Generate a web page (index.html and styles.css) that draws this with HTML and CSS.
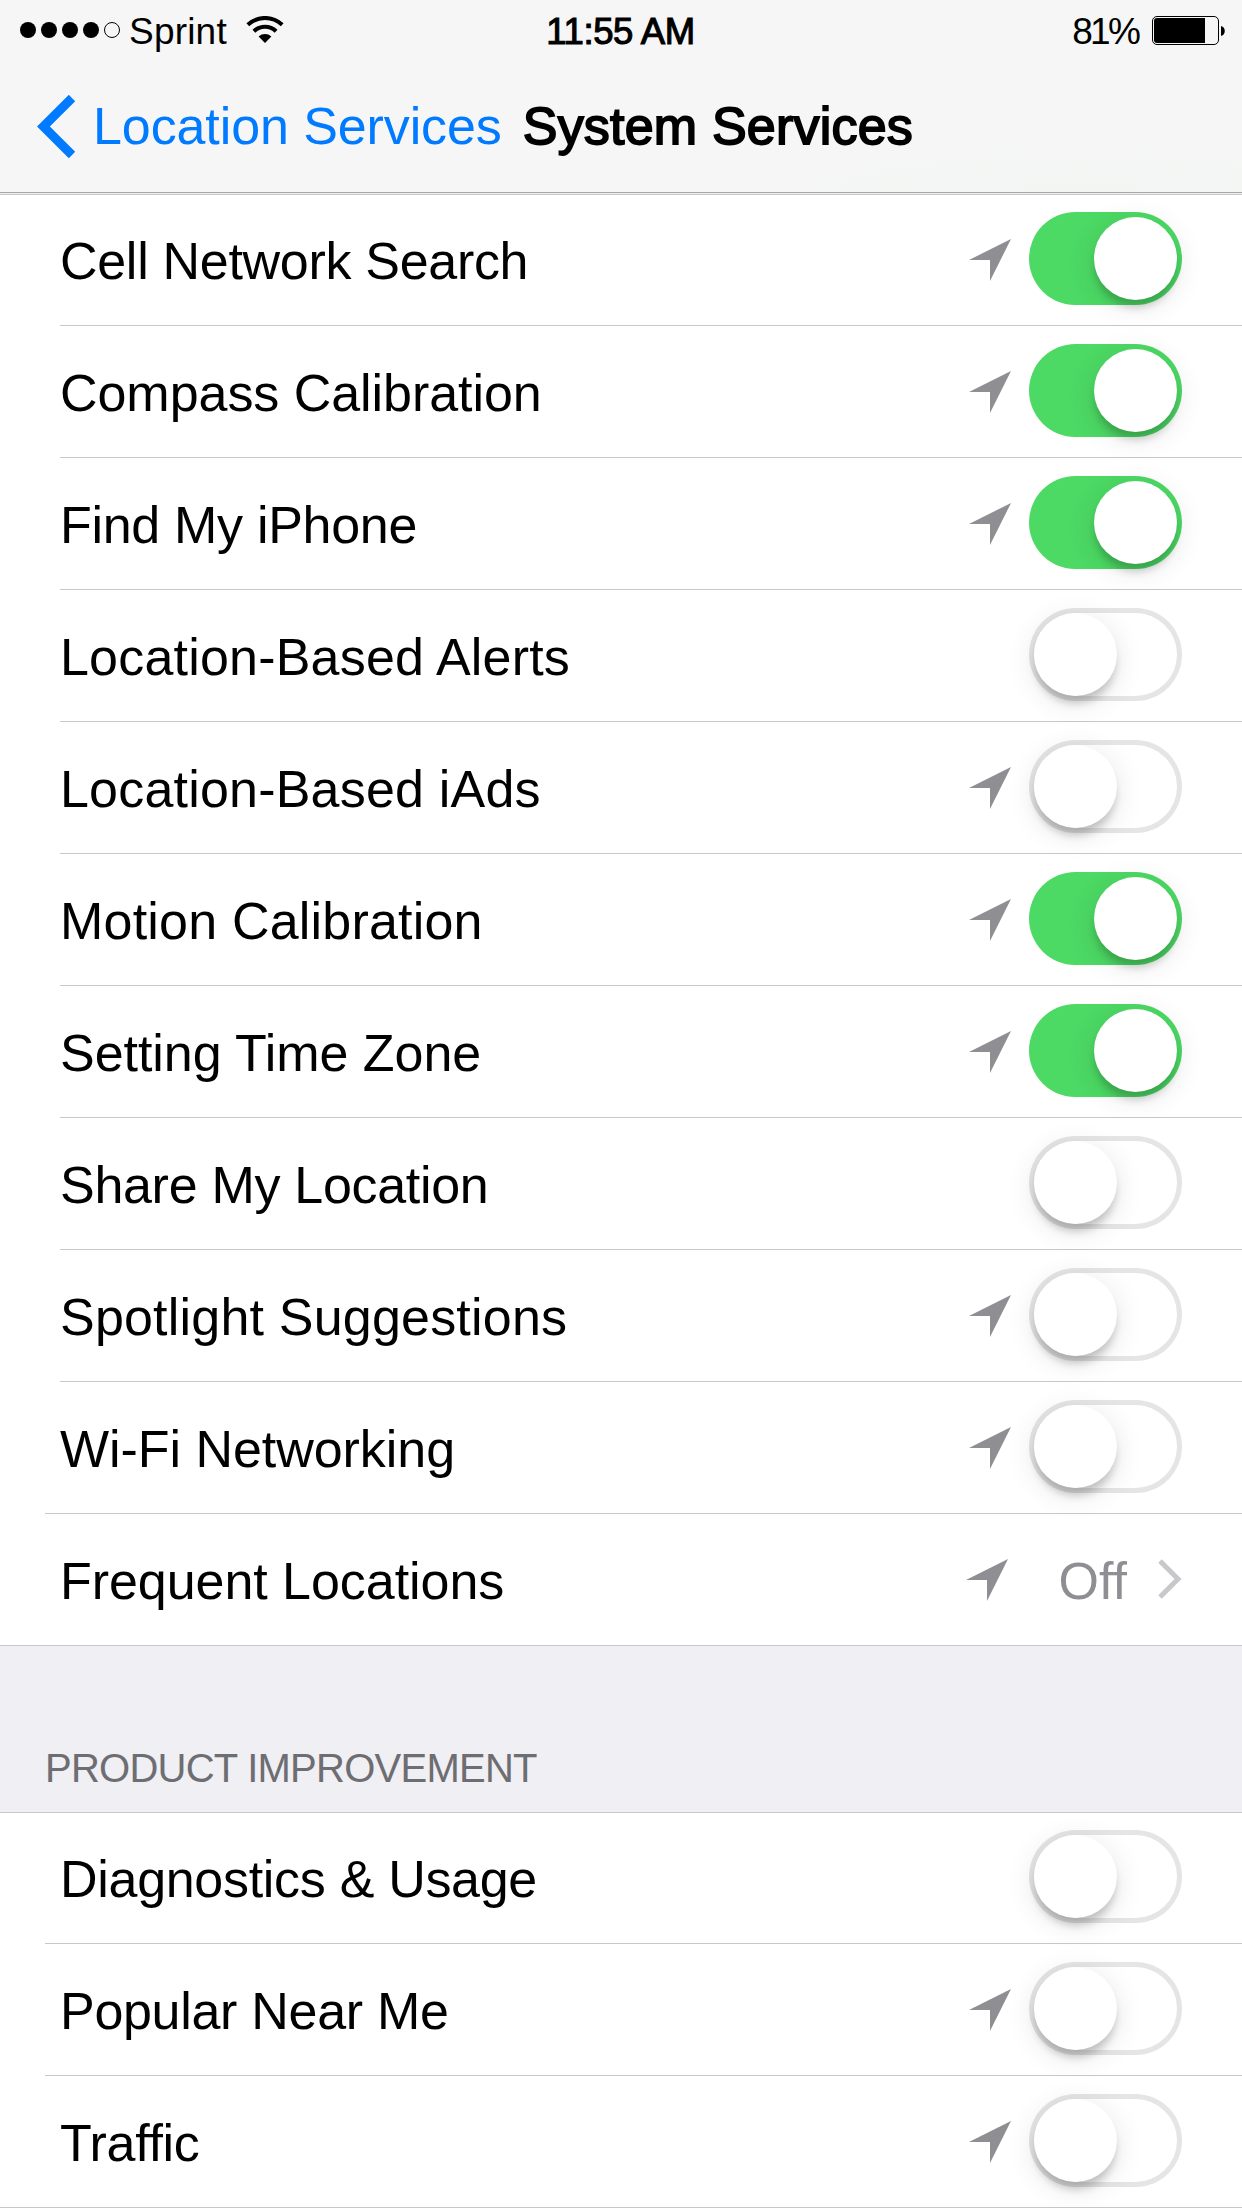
FILE: index.html
```html
<!DOCTYPE html>
<html lang="en">
<head>
  <meta charset="utf-8">
  <title>System Services</title>
  <link rel="stylesheet" href="styles.css">
</head>
<body>
  <svg class="defs" aria-hidden="true">
    <symbol id="arrow" viewBox="0 0 42 42">
      <path d="M42 0 L21 42 V21 H0 Z" fill="#8e8e93"/>
    </symbol>
  </svg>

  <header class="header">
    <div class="status-bar">
      <div class="status-left">
        <div class="signal">
          <span class="dot"></span>
          <span class="dot"></span>
          <span class="dot"></span>
          <span class="dot"></span>
          <span class="dot empty"></span>
        </div>
        <span class="carrier">Sprint</span>
        <svg class="wifi" width="38" height="28" viewBox="0 0 38 28">
          <path d="M1.8 8.8 A25 25 0 0 1 36.2 8.8" fill="none" stroke="#000" stroke-width="4"/>
          <path d="M7.9 15.2 A16 16 0 0 1 30.1 15.2" fill="none" stroke="#000" stroke-width="4"/>
          <path d="M12.6 20.4 A9.5 9.5 0 0 1 25.4 20.4 L19 27 Z"/>
        </svg>
      </div>
      <div class="time">11:55 AM</div>
      <div class="status-right">
        <span class="percent">81%</span>
        <svg class="battery" width="74" height="29" viewBox="0 0 74 29">
          <rect x="0.5" y="0.5" width="66" height="28" rx="4.5" fill="none" stroke="#000"/>
          <path d="M53 2 H5 A3 3 0 0 0 2 5 V24 A3 3 0 0 0 5 27 H53 Z"/>
          <path d="M69 10 C74 11 74 19 69 20 Z"/>
        </svg>
      </div>
    </div>
    <div class="nav-bar">
      <svg class="back" width="40" height="64" viewBox="0 0 40 64">
        <path d="M36 3 L7.4 31.5 L36 60" fill="none" stroke="#007aff" stroke-width="9"/>
      </svg>
      <a class="back-label">Location Services</a>
      <h1 class="title">System Services</h1>
    </div>
  </header>

  <main>
    <div class="group">
      <div class="row">
        <span class="label tight">Cell Network Search</span>
        <svg class="arrow"><use href="#arrow"/></svg>
        <span class="toggle on"></span>
      </div>
      <div class="row">
        <span class="label">Compass Calibration</span>
        <svg class="arrow"><use href="#arrow"/></svg>
        <span class="toggle on"></span>
      </div>
      <div class="row">
        <span class="label tight">Find My iPhone</span>
        <svg class="arrow"><use href="#arrow"/></svg>
        <span class="toggle on"></span>
      </div>
      <div class="row">
        <span class="label wide">Location-Based Alerts</span>
        <span class="toggle"></span>
      </div>
      <div class="row">
        <span class="label wide">Location-Based iAds</span>
        <svg class="arrow"><use href="#arrow"/></svg>
        <span class="toggle"></span>
      </div>
      <div class="row">
        <span class="label wide">Motion Calibration</span>
        <svg class="arrow"><use href="#arrow"/></svg>
        <span class="toggle on"></span>
      </div>
      <div class="row">
        <span class="label">Setting Time Zone</span>
        <svg class="arrow"><use href="#arrow"/></svg>
        <span class="toggle on"></span>
      </div>
      <div class="row">
        <span class="label tight">Share My Location</span>
        <span class="toggle"></span>
      </div>
      <div class="row">
        <span class="label wide">Spotlight Suggestions</span>
        <svg class="arrow"><use href="#arrow"/></svg>
        <span class="toggle"></span>
      </div>
      <div class="row outdent">
        <span class="label">Wi-Fi Networking</span>
        <svg class="arrow"><use href="#arrow"/></svg>
        <span class="toggle"></span>
      </div>
      <div class="row full">
        <span class="label">Frequent Locations</span>
        <svg class="arrow"><use href="#arrow"/></svg>
        <span class="value">Off</span>
        <svg class="chevron" width="24" height="40" viewBox="0 0 24 40">
          <path d="M2 2 L20 20 L2 38" fill="none" stroke="#c7c7cc" stroke-width="5"/>
        </svg>
      </div>
    </div>

    <h2 class="section-title">PRODUCT IMPROVEMENT</h2>

    <div class="group">
      <div class="row outdent">
        <span class="label tight">Diagnostics &amp; Usage</span>
        <span class="toggle"></span>
      </div>
      <div class="row outdent">
        <span class="label tight">Popular Near Me</span>
        <svg class="arrow"><use href="#arrow"/></svg>
        <span class="toggle"></span>
      </div>
      <div class="row full">
        <span class="label tight">Traffic</span>
        <svg class="arrow"><use href="#arrow"/></svg>
        <span class="toggle"></span>
      </div>
    </div>
  </main>
</body>
</html>
```
FILE: styles.css
```css
:root {
  --tint: #007aff;
  --green: #4cd964;
  --gray: #8e8e93;
  --separator: #c8c7cc;
  --group-background: #efeff4;
}

* {
  box-sizing: border-box;
}

body {
  margin: 0;
  width: 1242px;
  height: 2208px;
  overflow: hidden;
  background-color: #ffffff;
  color: #000000;
  font-family: "Liberation Sans", Arial, sans-serif;
  font-size: 52px;
}

svg {
  display: block;
  flex-shrink: 0;
}

.defs {
  width: 0;
  height: 0;
  position: absolute;
}

/* Header */
.header {
  height: 195px;
  background: radial-gradient(ellipse 420px 60px at 1080px 192px, #f2f6f3, #f6f6f6);
  border-bottom: 1px solid var(--separator);
  box-shadow: inset 0 -1px 0 #eeeeee, inset 0 -2px 0 #a7a7aa;
}

.status-bar {
  display: grid;
  grid-template-columns: 1fr auto 1fr;
  height: 60px;
  padding: 0 16px 0 20px;
  font-size: 37px;
  line-height: 64px;
}

.status-left,
.status-right {
  display: flex;
}

.status-right {
  justify-content: flex-end;
}

.signal {
  display: flex;
  gap: 5px;
  padding-top: 22px;
}

.dot {
  width: 16px;
  height: 16px;
  border-radius: 50%;
  background-color: #000000;
}

.dot.empty {
  background-color: transparent;
  border: 1px solid #000000;
}

.carrier {
  margin-left: 9px;
  letter-spacing: 0.2px;
}

.wifi {
  margin: 16px 0 0 19px;
}

.time {
  margin-right: 5px;
  font-size: 36.5px;
  letter-spacing: -0.4px;
  -webkit-text-stroke: 1.1px #000000;
}

.percent {
  letter-spacing: -2.8px;
}

.battery {
  margin: 16px 0 0 14px;
}

.nav-bar {
  display: flex;
  padding-left: 36px;
  line-height: 62px;
}

.back {
  margin-top: 35px;
}

.back-label {
  margin: 35px 0 0 17px;
  color: var(--tint);
  letter-spacing: -0.1px;
}

.title {
  margin: 35px 0 0 21px;
  font-size: 52px;
  font-weight: normal;
  letter-spacing: 0.2px;
  -webkit-text-stroke: 1.8px #000000;
}

/* Settings list */
.row {
  display: flex;
  align-items: flex-end;
  height: 132px;
  margin-left: 60px;
  padding-right: 60px;
  border-bottom: 1px solid var(--separator);
}

.row:first-child {
  height: 131px;
}

.row.outdent {
  margin-left: 45px;
  padding-left: 15px;
}

.row.full {
  margin-left: 0;
  padding-left: 60px;
}

.label {
  flex: 1;
  margin-bottom: 34px;
  line-height: 60px;
  letter-spacing: -0.05px;
  white-space: nowrap;
}

.label.tight {
  letter-spacing: -0.3px;
}

.label.wide {
  letter-spacing: 0.2px;
}

.arrow {
  width: 42px;
  height: 42px;
  margin: 0 18px 44px 0;
}

.toggle {
  width: 153px;
  height: 93px;
  margin-bottom: 20px;
  padding: 5px;
  border-radius: 47px;
  box-shadow: inset 0 0 0 5px #e5e5e5;
}

.toggle::before {
  content: "";
  display: block;
  width: 83px;
  height: 83px;
  border-radius: 50%;
  background-color: #ffffff;
  box-shadow: 0 9px 9px -2px rgba(0, 0, 0, 0.2), 0 6px 30px rgba(0, 0, 0, 0.11);
}

.toggle.on {
  background-color: var(--green);
  box-shadow: none;
}

.toggle.on::before {
  margin-left: 60px;
}

.value {
  margin: 0 31px 34px 33px;
  line-height: 60px;
  color: var(--gray);
}

.chevron {
  margin-bottom: 46px;
}

.section-title {
  height: 167px;
  margin: 0;
  padding: 101px 0 0 45px;
  border-bottom: 1px solid var(--separator);
  background-color: var(--group-background);
  color: #6d6d72;
  font-size: 40px;
  font-weight: normal;
  line-height: 42px;
  letter-spacing: -0.75px;
}
```
